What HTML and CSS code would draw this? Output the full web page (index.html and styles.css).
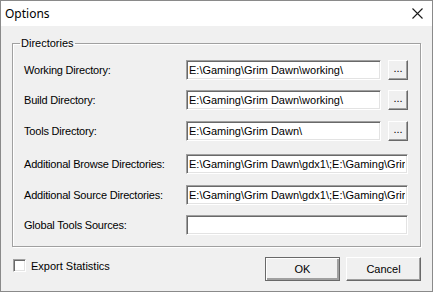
FILE: index.html
```html
<!DOCTYPE html>
<html lang="en">

<head>
  <meta charset="UTF-8">
  <title>Options</title>
  <link rel="stylesheet" href="styles.css">
</head>

<body>
  <div class="window">
    <div class="titlebar">
      <span class="title">Options</span>
      <svg class="close" width="11" height="11" viewBox="0 0 11 11">
        <path d="M0.5 0.5 L10.5 10.5 M10.5 0.5 L0.5 10.5" stroke="#1a1a1a" stroke-width="1.1" fill="none" />
      </svg>
    </div>

    <div class="content">
      <fieldset class="group">
        <legend>Directories</legend>

        <div class="row">
          <label class="lbl">Working Directory:</label>
          <input class="edit" type="text" value="E:\Gaming\Grim Dawn\working\" readonly>
          <button class="browse" type="button">...</button>
        </div>

        <div class="row r2">
          <label class="lbl">Build Directory:</label>
          <input class="edit" type="text" value="E:\Gaming\Grim Dawn\working\" readonly>
          <button class="browse" type="button">...</button>
        </div>

        <div class="row r3">
          <label class="lbl">Tools Directory:</label>
          <input class="edit" type="text" value="E:\Gaming\Grim Dawn\" readonly>
          <button class="browse" type="button">...</button>
        </div>

        <div class="row r4">
          <label class="lbl">Additional Browse Directories:</label>
          <input class="edit wide" type="text" value="E:\Gaming\Grim Dawn\gdx1\;E:\Gaming\Grim Dawn\gdx2\" readonly>
        </div>

        <div class="row r5">
          <label class="lbl">Additional Source Directories:</label>
          <input class="edit wide" type="text" value="E:\Gaming\Grim Dawn\gdx1\;E:\Gaming\Grim Dawn\gdx2\" readonly>
        </div>

        <div class="row r6">
          <label class="lbl">Global Tools Sources:</label>
          <input class="edit wide" type="text" value="" readonly>
        </div>
      </fieldset>

      <div class="footer">
        <label class="check">
          <input type="checkbox">
          <span>Export Statistics</span>
        </label>
        <div class="actions">
          <button class="btn default" type="button">OK</button>
          <button class="btn" type="button">Cancel</button>
        </div>
      </div>
    </div>
  </div>
</body>

</html>
```

FILE: styles.css
```css
body {
  margin: 0;
  padding: 0;
  background-color: #fff;
  font-family: "Liberation Sans", Arial, sans-serif;
  font-size: 11px;
  color: #000;
}

.window {
  width: 431px;
  height: 290px;
  border: 1px solid #8a8a8a;
  background-color: #f0f0f0;
  display: flex;
  flex-direction: column;
}

.titlebar {
  height: 25px;
  background-color: #fff;
  display: flex;
  align-items: center;
  justify-content: space-between;
  padding: 0 9px 0 4px;
}

.title {
  font-family: "Noto Sans", sans-serif;
  font-size: 12px;
  color: #000;
}

.close {
  display: block;
}

.content {
  flex: 1;
  padding: 11px 11px 0 11px;
}

/* etched group box */
.group {
  margin: 0;
  padding: 10px 11px 11px 11px;
  border: 1px solid #a0a0a0;
  box-shadow: inset 1px 1px 0 #fff, 1px 1px 0 #fff;
}

.group legend {
  margin-left: -4px;
  padding: 0 1px;
  line-height: 13px;
}

.row {
  display: flex;
  align-items: center;
  height: 20px;
}

/* spacing between rows is not even in the original dialog */
.r2 { margin-top: 10px; }
.r3 { margin-top: 11px; }
.r4 { margin-top: 13px; }
.r5 { margin-top: 11px; }
.r6 { margin-top: 10px; }

.lbl {
  width: 162px;
  flex-shrink: 0;
  white-space: nowrap;
  letter-spacing: -0.2px;
}

.edit {
  box-sizing: border-box;
  height: 20px;
  width: 195px;
  margin: 0 7px 0 0;
  padding: 0 2px;
  font-family: "Liberation Sans", Arial, sans-serif;
  font-size: 11px;
  color: #000;
  background-color: #fff;
  border: 1px solid;
  border-color: #a0a0a0 #fff #fff #a0a0a0;
  box-shadow: inset 1px 1px 0 #696969, inset -1px -1px 0 #e3e3e3;
  outline: none;
}

.edit.wide {
  width: 222px;
  margin-right: 0;
}

.browse {
  box-sizing: border-box;
  width: 20px;
  height: 20px;
  margin: 0;
  padding: 0 0 4px 0;
  font-family: "Liberation Sans", Arial, sans-serif;
  font-size: 11px;
  background-color: #f0f0f0;
  border: 1px solid;
  border-color: #fff #696969 #696969 #fff;
  box-shadow: inset -1px -1px 0 #a0a0a0;
}

.footer {
  display: flex;
  justify-content: space-between;
  align-items: flex-start;
  margin-top: 10px;
}

.check {
  display: flex;
  align-items: center;
  margin-top: 2px;
}

.check input {
  appearance: none;
  box-sizing: border-box;
  width: 13px;
  height: 13px;
  margin: 0 5px 0 1px;
  background-color: #fff;
  border: 1px solid;
  border-color: #a0a0a0 #fff #fff #a0a0a0;
  box-shadow: inset 1px 1px 0 #696969, inset -1px -1px 0 #e3e3e3;
}

.actions {
  display: flex;
  gap: 6px;
}

.btn {
  box-sizing: border-box;
  width: 75px;
  height: 24px;
  margin: 0;
  padding: 0;
  font-family: "Liberation Sans", Arial, sans-serif;
  font-size: 11px;
  color: #000;
  background-color: #f0f0f0;
  border: 1px solid;
  border-color: #fff #696969 #696969 #fff;
  box-shadow: inset -1px -1px 0 #a0a0a0;
}

.btn.default {
  border-color: #696969;
  box-shadow: inset 1px 1px 0 #fff, inset -2px -2px 0 #a0a0a0;
}
```
